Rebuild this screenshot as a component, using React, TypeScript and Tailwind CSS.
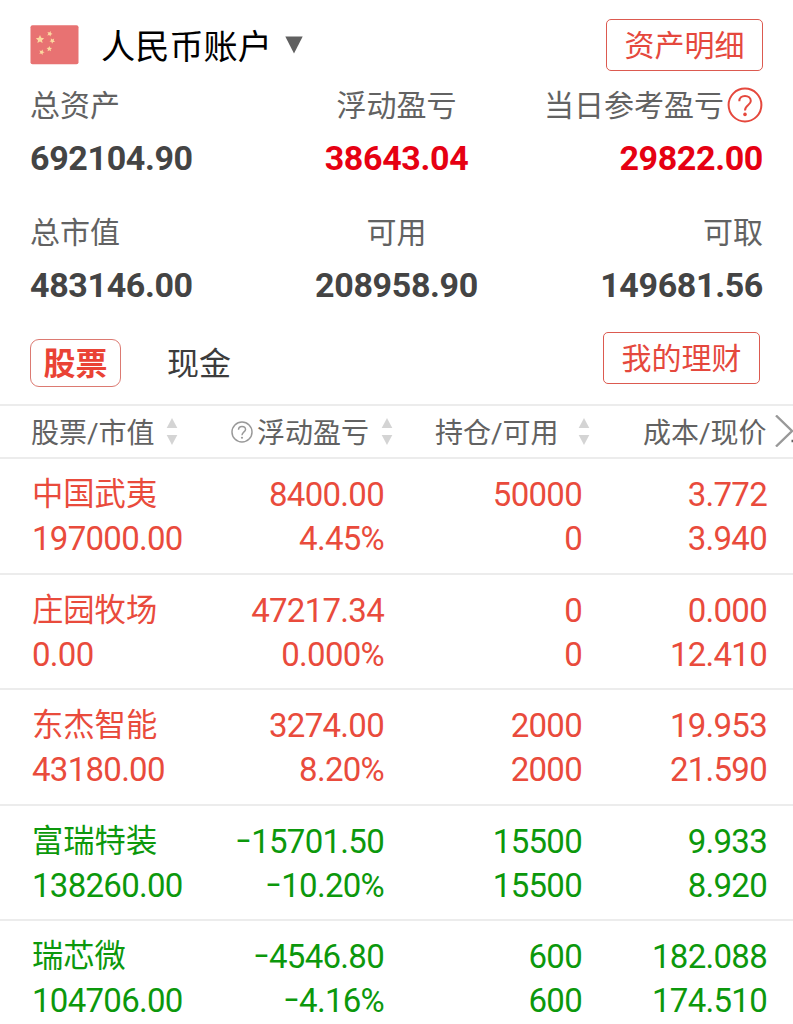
import React from "react";

type Holding = { name: string; value: string; pl: string; pct: string; pos: string; avail: string; cost: string; price: string; up: boolean };

const holdings: Holding[] = [
  { name: "中国武夷", value: "197000.00", pl: "8400.00", pct: "4.45%", pos: "50000", avail: "0", cost: "3.772", price: "3.940", up: true },
  { name: "庄园牧场", value: "0.00", pl: "47217.34", pct: "0.000%", pos: "0", avail: "0", cost: "0.000", price: "12.410", up: true },
  { name: "东杰智能", value: "43180.00", pl: "3274.00", pct: "8.20%", pos: "2000", avail: "2000", cost: "19.953", price: "21.590", up: true },
  { name: "富瑞特装", value: "138260.00", pl: "–15701.50", pct: "–10.20%", pos: "15500", avail: "15500", cost: "9.933", price: "8.920", up: false },
  { name: "瑞芯微", value: "104706.00", pl: "–4546.80", pct: "–4.16%", pos: "600", avail: "600", cost: "182.088", price: "174.510", up: false },
];

function Flag() {
  const star = "M0-1 .28-.38.95-.31.45.15.59.81 0 .48-.59.81-.45.15-.95-.31-.28-.38Z";
  return (
    <svg className="h-10 w-[49px] shrink-0" viewBox="0 0 49 40">
      <rect x="0.5" y="0.3" width="48" height="39" rx="2" fill="#e87272" />
      <g fill="#fbd9a0">
        <path d={star} transform="translate(10 14.5) scale(4.4)" />
        <path d={star} transform="translate(19.7 8.8) rotate(20) scale(2.9)" />
        <path d={star} transform="translate(22.3 15.8) rotate(40) scale(2.9)" />
        <path d={star} transform="translate(19.3 23.8) scale(2.9)" />
        <path d={star} transform="translate(11.7 27.2) rotate(20) scale(2.9)" />
      </g>
    </svg>
  );
}

function Help({ className, width }: { className: string; width: number }) {
  return (
    <svg className={className} viewBox="0 0 36 36" fill="none" stroke="currentColor" strokeWidth={width}>
      <circle cx="18" cy="18" r="16.4" />
      <path d="M12.3 14.3C12.3 10.8 14.8 8.9 18 8.9S23.8 11 23.8 14C23.8 18 18 18 18 23.4" />
      <circle cx="18" cy="27.4" r="1.8" fill="currentColor" stroke="none" />
    </svg>
  );
}

function Sort() {
  return (
    <svg className="h-[27px] w-3 shrink-0" viewBox="0 0 12 27" fill="#d4d4d4">
      <path d="M6 0 11.3 10H.7Z" />
      <path d="M6 27 11.3 17H.7Z" />
    </svg>
  );
}

function Amount({ text }: { text: string }) {
  if (!text.startsWith("–")) return <span>{text}</span>;
  return (
    <span>
      <span className="inline-block origin-right scale-x-[0.72]">–</span>
      {text.slice(1)}
    </span>
  );
}

function Stat({ label, value, tone, align, help }: { label: string; value: string; tone: string; align: string; help?: boolean }) {
  return (
    <div className={`flex flex-col ${align}`}>
      <div className="flex h-[52px] items-center whitespace-nowrap text-[30px] leading-[50px] text-[#626262]">
        <span className="pt-[2px]">{label}</span>
        {help && <Help className="ml-[3px] h-9 w-9 text-[#e5483d]" width={2} />}
      </div>
      <div className={`h-[54px] text-[34px] font-bold leading-[54px] tracking-[-0.35px] ${tone}`}>{value}</div>
    </div>
  );
}

export default function App() {
  return (
    <main className="h-[1024px] w-[793px] overflow-hidden bg-white font-['Roboto','Noto_Sans_CJK_SC',sans-serif]">
      <header className="flex h-[79px] items-start pl-[30px] pr-[30px] pt-[19px]">
        <div className="flex h-[52px] items-center">
          <Flag />
          <h1 className="ml-[22px] pt-[5px] text-[34.2px] leading-[47px] text-black">人民币账户</h1>
          <svg className="ml-[13px] h-[18px] w-[18px]" viewBox="0 0 18 18">
            <path d="M.3.5H17.7L9 17.5Z" fill="#606060" />
          </svg>
        </div>
        <button className="ml-auto h-[52px] w-[157px] rounded-[5px] border-[1.5px] border-[#dc5a50] pt-[2px] text-[30px] leading-[48px] text-[#e5483d]">资产明细</button>
      </header>

      <section className="grid h-[254px] grid-cols-3 content-start gap-y-[21px] pl-[30px] pr-[30px]">
        <Stat label="总资产" value="692104.90" tone="text-[#444444]" align="items-start" />
        <Stat label="浮动盈亏" value="38643.04" tone="text-[#e60012]" align="items-center" />
        <Stat label="当日参考盈亏" value="29822.00" tone="text-[#e60012]" align="items-end" help />
        <Stat label="总市值" value="483146.00" tone="text-[#444444]" align="items-start" />
        <Stat label="可用" value="208958.90" tone="text-[#444444]" align="items-center" />
        <Stat label="可取" value="149681.56" tone="text-[#444444]" align="items-end" />
      </section>

      <nav className="flex h-[71px] items-start pl-[30px] pr-[33px]">
        <button className="mt-[6px] h-12 w-[91px] rounded-[9px] border border-[#dc7a72] pt-[2px] text-[32px] font-bold leading-[44px] text-[#ea4335]">股票</button>
        <button className="ml-[46px] mt-[6px] h-12 pt-[2px] text-[32px] leading-[46px] text-[#3c3c3c]">现金</button>
        <button className="-mt-px ml-auto h-[52px] w-[157px] rounded-[5px] border-[1.5px] border-[#dc5a50] pt-[2px] text-[30px] leading-[48px] text-[#e5483d]">我的理财</button>
      </nav>

      <div className="flex h-[55px] items-center whitespace-nowrap border-y-2 border-[#ececec] pl-[31px] text-[28px] leading-[46px] text-[#626262]">
        <div className="flex w-[200px] items-center gap-[11px]"><span className="pt-1">股票/市值</span><Sort /></div>
        <div className="flex w-[204px] items-center"><Help className="mr-1 h-[22px] w-[22px] text-[#999999]" width={2.4} /><span className="mr-3 pt-1">浮动盈亏</span><Sort /></div>
        <div className="flex w-[208px] items-center gap-[19px]"><span className="pt-1">持仓/可用</span><Sort /></div>
        <span className="pt-1">成本/现价</span>
        <svg className="mb-px ml-2 h-8 w-[18px] shrink-0" viewBox="0 0 18 32" fill="none" stroke="#999999" strokeWidth="2.4">
          <path d="M1 .5 17 16 1 31.5" />
          <path d="M16.5 26H18" stroke="#626262" />
        </svg>
      </div>

      {holdings.map((h) => (
        <div
          key={h.name}
          className={`grid h-[115.5px] grid-cols-[160px_192px_198px_185px] content-start whitespace-nowrap border-b-2 border-[#ececec] pl-8 pt-[14px] text-right text-[33px] leading-[44px] tracking-[-0.72px] ${h.up ? "text-[#e94b3c]" : "text-[#0c980c]"}`}
        >
          <span className="text-left text-[31.3px] tracking-normal">{h.name}</span>
          <Amount text={h.pl} />
          <span>{h.pos}</span>
          <span>{h.cost}</span>
          <span className="text-left">{h.value}</span>
          <Amount text={h.pct} />
          <span>{h.avail}</span>
          <span>{h.price}</span>
        </div>
      ))}
    </main>
  );
}
